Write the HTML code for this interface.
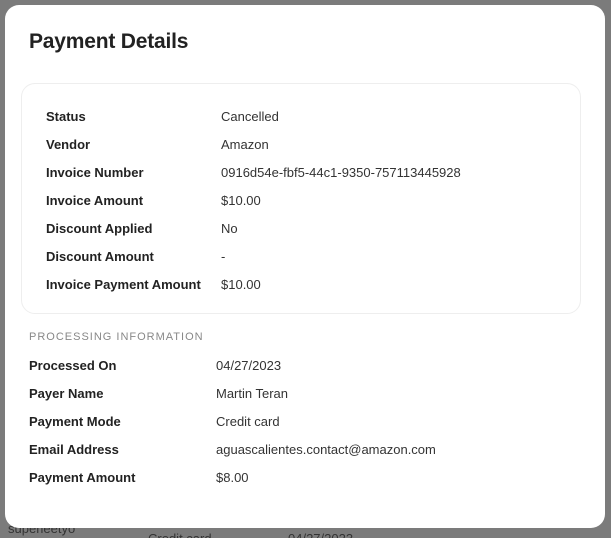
<!DOCTYPE html>
<html style="overflow:hidden;height:538px"><head><style>
body{margin:0;width:611px;height:538px;background:#7b7b7b;font-family:"Liberation Sans",sans-serif;position:relative;overflow:hidden;color:#222}
.bg{position:absolute;color:#333;font-size:13px}
.m{position:absolute;left:5px;top:5px;width:600px;height:523px;background:#fff;border-radius:14px}
h1{position:absolute;left:24px;top:25px;margin:0;font-size:21px;font-weight:bold;color:#222;letter-spacing:-0.2px}
.card{position:absolute;left:16px;top:78px;width:558px;height:229px;border:1px solid #eee;border-radius:14px}
.r{position:absolute;font-size:13px;line-height:16px}
.l{font-weight:bold;color:#222}
.v{color:#333}
.sec{position:absolute;left:24px;top:326px;font-size:11px;letter-spacing:1px;color:#888}
</style></head><body>
<div class="bg" style="left:8px;top:521px">superleetyo</div>
<div class="bg" style="left:148px;top:531px">Credit card</div>
<div class="bg" style="left:288px;top:531px">04/27/2023</div>
<div class="m">
<h1>Payment Details</h1>
<div class="card"></div>
<div class="r l" style="left:41px;top:104px">Status</div><div class="r v" style="left:216px;top:104px">Cancelled</div>
<div class="r l" style="left:41px;top:132px">Vendor</div><div class="r v" style="left:216px;top:132px">Amazon</div>
<div class="r l" style="left:41px;top:160px">Invoice Number</div><div class="r v" style="left:216px;top:160px">0916d54e-fbf5-44c1-9350-757113445928</div>
<div class="r l" style="left:41px;top:188px">Invoice Amount</div><div class="r v" style="left:216px;top:188px">$10.00</div>
<div class="r l" style="left:41px;top:216px">Discount Applied</div><div class="r v" style="left:216px;top:216px">No</div>
<div class="r l" style="left:41px;top:244px">Discount Amount</div><div class="r v" style="left:216px;top:244px">-</div>
<div class="r l" style="left:41px;top:272px">Invoice Payment Amount</div><div class="r v" style="left:216px;top:272px">$10.00</div>
<div class="sec">PROCESSING INFORMATION</div>
<div class="r l" style="left:24px;top:353px">Processed On</div><div class="r v" style="left:211px;top:353px">04/27/2023</div>
<div class="r l" style="left:24px;top:381px">Payer Name</div><div class="r v" style="left:211px;top:381px">Martin Teran</div>
<div class="r l" style="left:24px;top:409px">Payment Mode</div><div class="r v" style="left:211px;top:409px">Credit card</div>
<div class="r l" style="left:24px;top:437px">Email Address</div><div class="r v" style="left:211px;top:437px">aguascalientes.contact@amazon.com</div>
<div class="r l" style="left:24px;top:465px">Payment Amount</div><div class="r v" style="left:211px;top:465px">$8.00</div>
</div>
</body></html>
